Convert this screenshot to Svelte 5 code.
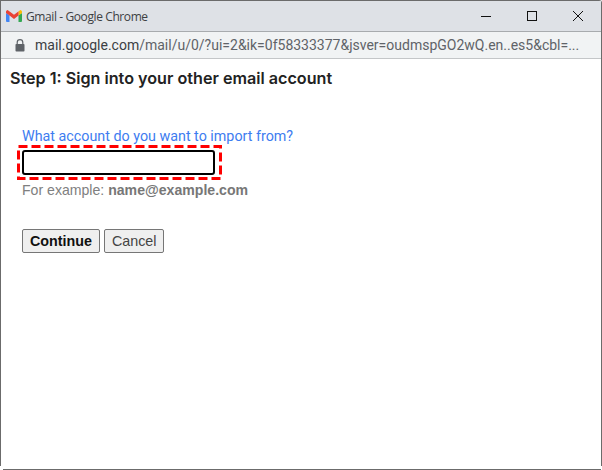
<script lang="ts">
	let email = $state('');
</script>

<div class="window">
	<header class="titlebar">
		<svg class="gmail" viewBox="0 0 16 12" width="16" height="12" aria-hidden="true">
			<path d="M0 3 L0 11 Q0 12 1 12 L3.5 12 L3.5 5.2 Z" fill="#4285f4" />
			<path d="M16 3 L16 11 Q16 12 15 12 L12.5 12 L12.5 5.2 Z" fill="#34a853" />
			<path d="M12.5 1.5 L12.5 5.6 L16 3 L16 1.5 Q15.6 0 14.4 0 Z" fill="#fbbc04" />
			<path d="M0 3 L0 1.5 Q0.4 0 1.6 0 L8 4.8 L14.4 0 L12.5 1.5 L12.5 5.6 L8 9 L3.5 5.6 L3.5 12 L3.5 5.4 Z" fill="#ea4335" />
		</svg>
		<span class="title">Gmail - Google Chrome</span>
		<div class="controls">
			<svg viewBox="0 0 12 12" width="12" height="12" aria-hidden="true"><path d="M1 6.5 H11" /></svg>
			<svg viewBox="0 0 12 12" width="12" height="12" aria-hidden="true"><rect x="1.5" y="1.5" width="9" height="9" /></svg>
			<svg viewBox="0 0 12 12" width="12" height="12" aria-hidden="true"><path d="M1 1 L11 11 M11 1 L1 11" /></svg>
		</div>
	</header>
	<div class="addressbar">
		<svg class="lock" viewBox="0 0 10 13" width="10" height="13" aria-hidden="true">
			<path d="M2.2 5 V3.4 a2.8 2.8 0 0 1 5.6 0 V5" fill="none" stroke="#5f6368" stroke-width="1.2" />
			<rect x="0.5" y="5" width="9" height="7.5" rx="0.8" fill="#5f6368" />
		</svg>
		<span class="url"><span class="host">mail.google.com</span>/mail/u/0/?ui=2&amp;ik=0f58333377&amp;jsver=oudmspGO2wQ.en..es5&amp;cbl=...</span>
	</div>
	<main class="content">
		<h1>Step 1: Sign into your other email account</h1>
		<form class="form" onsubmit={(e) => e.preventDefault()}>
			<label for="account">What account do you want to import from?</label>
			<div class="field">
				<input id="account" type="text" bind:value={email} />
				<svg class="highlight" width="205" height="35" aria-hidden="true">
					<rect x="1.5" y="1.5" width="202" height="32" fill="none" stroke="#f00" stroke-width="3" stroke-dasharray="9 4" />
				</svg>
			</div>
			<p class="hint">For example: <b>name@example.com</b></p>
			<div class="buttons">
				<button type="submit" class="primary">Continue</button>
				<button type="button">Cancel</button>
			</div>
		</form>
	</main>
	<div class="bottom-edge"></div>
</div>

<style>
	:global(body) {
		background: #fff;
	}

	.window {
		box-sizing: border-box;
		width: 602px;
		height: 470px;
		display: flex;
		flex-direction: column;
		background: #fff;
		border-top: 1px solid #6b6b6b;
		border-left: 1px solid #6b6b6b;
		border-right: 1px solid #6b6b6b;
		border-top-right-radius: 3px;
		position: relative;
	}

	/* the side borders stop short of the bottom line */
	.bottom-edge {
		position: absolute;
		left: -1px;
		right: -1px;
		bottom: 0;
		height: 4px;
		background: #fff;
	}

	.bottom-edge::after {
		content: '';
		position: absolute;
		left: 3px;
		right: 1px;
		bottom: 0;
		height: 1px;
		background: #6b6b6b;
	}

	.titlebar {
		height: 30px;
		flex: none;
		display: flex;
		align-items: center;
		background: #dee1e6;
		padding-left: 5px;
		box-sizing: border-box;
	}

	.gmail {
		flex: none;
		margin-top: -1px;
	}

	.title {
		margin-left: 4px;
		font: 12px 'Open Sans', 'Noto Sans', sans-serif;
		color: #3c4043;
		letter-spacing: -0.4px;
	}

	.controls {
		margin-left: auto;
		display: flex;
		gap: 34px;
		padding-right: 17px;
		margin-top: -1px;
	}

	.controls svg {
		fill: none;
		stroke: #111;
		stroke-width: 1;
	}

	.addressbar {
		height: 28px;
		flex: none;
		display: flex;
		align-items: center;
		box-sizing: border-box;
		background: #f1f3f4;
		border-top: 1px solid #a8abae;
		border-bottom: 1px solid #c4c6c8;
		padding-left: 14px;
	}

	.url {
		margin-left: 10px;
		font: 14px Roboto, 'Noto Sans', sans-serif;
		color: #5f6368;
		white-space: nowrap;
	}

	.host {
		color: #3c4043;
	}

	.content {
		flex: 1;
		padding: 0 9px;
	}

	h1 {
		margin: 10px 0 0;
		font: 600 16.15px Inter, Roboto, sans-serif;
		color: #222;
		line-height: 18px;
	}

	.form {
		padding: 41px 0 0 12px;
		display: flex;
		flex-direction: column;
		align-items: flex-start;
	}

	label {
		font: 14.3px/16px Roboto, 'Liberation Sans', sans-serif;
		color: #3d7cf0;
	}

	.field {
		position: relative;
		margin-top: 6px;
	}

	input {
		display: block;
		box-sizing: border-box;
		width: 193px;
		height: 25px;
		border: 2px solid #000;
		border-radius: 3px;
		outline: none;
		padding: 0 4px;
		background: #fff;
	}

	.highlight {
		position: absolute;
		left: -5px;
		top: -5px;
		pointer-events: none;
	}

	.hint {
		margin: 7px 0 0;
		font: 14.1px/16px 'Liberation Sans', Roboto, sans-serif;
		color: #808080;
	}

	.hint b {
		font-weight: 700;
		color: #777;
	}

	.buttons {
		display: flex;
		gap: 4px;
		margin-top: 31px;
	}

	button {
		box-sizing: border-box;
		height: 24px;
		padding: 0 7px;
		background: #efefef;
		border: 1px solid #767676;
		border-radius: 2px;
		font: 14.3px 'Liberation Sans', Roboto, sans-serif;
		color: #444;
	}

	.primary {
		font-weight: 700;
		color: #111;
	}
</style>
